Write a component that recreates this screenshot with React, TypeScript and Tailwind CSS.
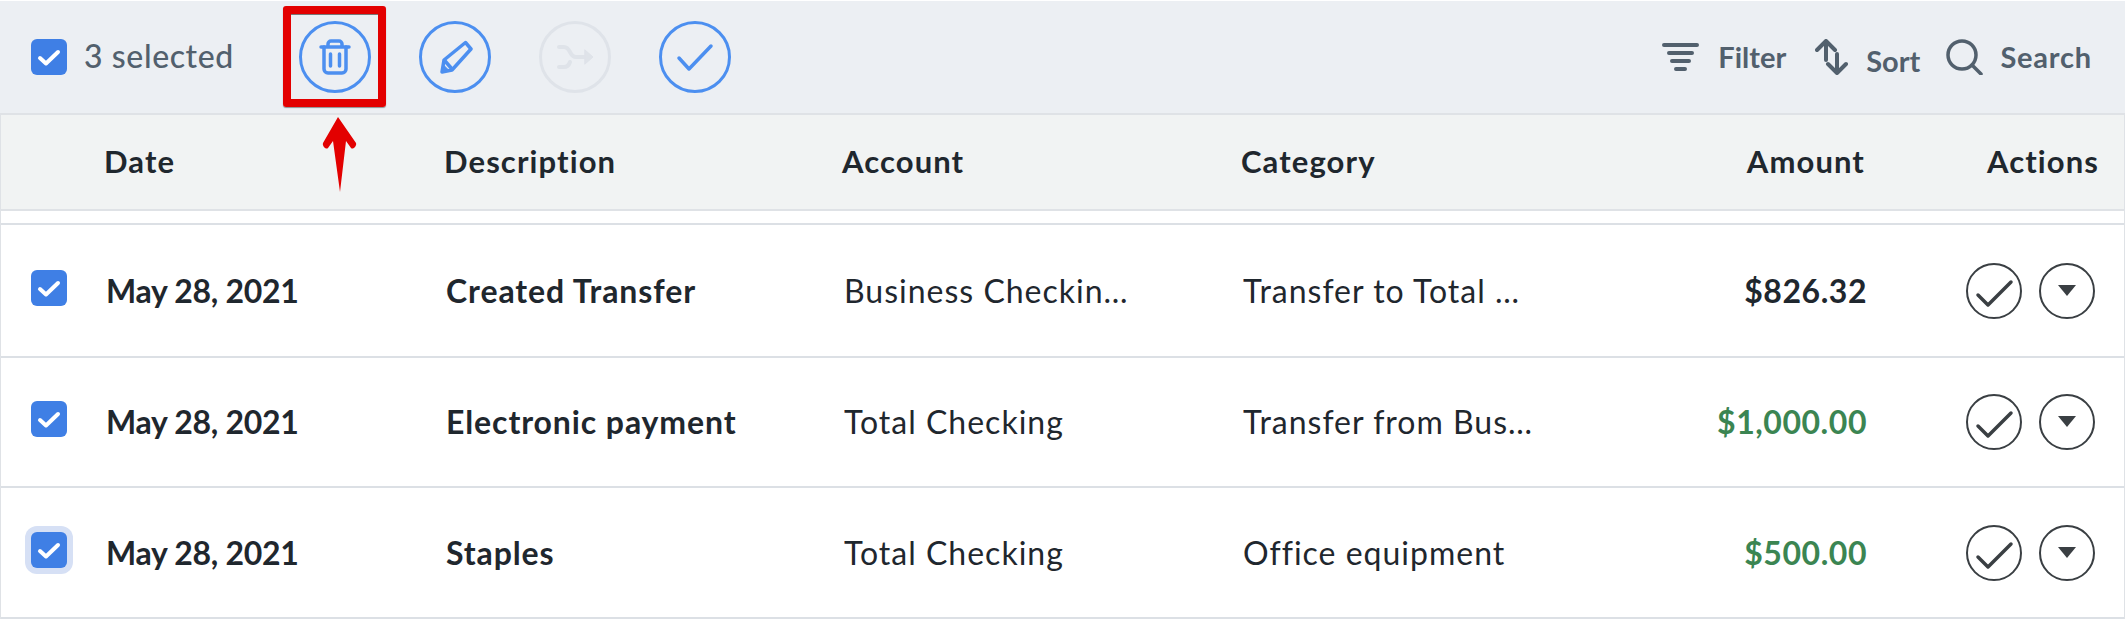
const rows = [
  {
    description: "Created Transfer",
    account: "Business Checking Account",
    category: "Transfer to Total Business",
    amount: "$826.32",
    amountClass: "text-[#1f272e]",
    rowClass: "h-[133px]",
    focused: false,
  },
  {
    description: "Electronic payment",
    account: "Total Checking",
    category: "Transfer from Business",
    amount: "$1,000.00",
    amountClass: "text-[#3b8552]",
    rowClass: "h-[130px]",
    focused: false,
  },
  {
    description: "Staples",
    account: "Total Checking",
    category: "Office equipment",
    amount: "$500.00",
    amountClass: "text-[#3b8552]",
    rowClass: "h-[131px]",
    focused: true,
  },
];

function Checkbox({ focused = false }: { focused?: boolean }) {
  return (
    <div
      className={`h-9 w-9 rounded-md bg-[#3f7fe5] ${
        focused ? "shadow-[0_0_0_6px_#d6e0f5]" : ""
      }`}
    >
      <svg viewBox="0 0 36 36" className="h-9 w-9" fill="none" stroke="#fff" strokeWidth="4" strokeLinecap="round" strokeLinejoin="round">
        <path d="M9 19l6 5.5L27 13" />
      </svg>
    </div>
  );
}

function ToolButton({ muted = false, children }: { muted?: boolean; children: React.ReactNode }) {
  return (
    <div
      className={`flex h-[72px] w-[72px] shrink-0 items-center justify-center rounded-full border-[3.5px] ${
        muted ? "border-[#dfe3e9] text-[#dfe3e9]" : "border-[#4c8ff0] text-[#4c8ff0]"
      }`}
    >
      {children}
    </div>
  );
}

function ActionButtons() {
  return (
    <div className="flex items-center justify-end gap-[17px] pr-[29px]">
      <div className="flex h-14 w-14 items-center justify-center rounded-full border-2 border-[#3a3f43]">
        <svg viewBox="0 0 52 52" className="h-[52px] w-[52px]" fill="none" stroke="#3a3f43" strokeWidth="3.5" strokeLinecap="round" strokeLinejoin="round">
          <path d="M10 30l10 10L43 17" />
        </svg>
      </div>
      <div className="flex h-14 w-14 items-center justify-center rounded-full border-2 border-[#3a3f43]">
        <svg viewBox="0 0 18 11" className="mb-[1px] h-[11px] w-[18px]" fill="#3a3f43">
          <path d="M0 0h18l-9 11z" />
        </svg>
      </div>
    </div>
  );
}

export default function App() {
  return (
    <div className="relative h-[624px] w-[2125px] overflow-hidden bg-white font-['Lato',sans-serif]">
      <div className="flex h-[115px] items-center border-b-2 border-t border-[#dfe2e6] border-t-white bg-[#eceff3] pl-[31px]">
        <Checkbox />
        <span className="mb-[3px] ml-[17px] w-[148px] whitespace-nowrap text-[32px] font-medium tracking-[0.6px] text-[#52606d]">3 selected</span>
        <div className="ml-[67px] flex gap-[48px]">
          <ToolButton>
            <svg viewBox="0 0 32 36" className="h-[36px] w-[32px]" fill="none" stroke="currentColor" strokeWidth="3.5" strokeLinecap="round" strokeLinejoin="round">
              <path d="M2 8h28" />
              <path d="M9 7V5a3 3 0 0 1 3-3h8a3 3 0 0 1 3 3v2" />
              <path d="M5 8v22a4 4 0 0 0 4 4h14a4 4 0 0 0 4-4V8" />
              <path d="M11.5 15v12M20.5 15v12" />
            </svg>
          </ToolButton>
          <ToolButton>
            <svg viewBox="0 0 36 36" className="h-[36px] w-[36px]" fill="none" stroke="currentColor" strokeWidth="3.5" strokeLinecap="round" strokeLinejoin="round">
              <path d="M28.5 3.5l5.5 6.5L15 31l-10 2 2-12z" />
              <path d="M8 22l7 8" />
              <path d="M5 33l1.5-7 5 5z" fill="currentColor" strokeWidth="1" />
            </svg>
          </ToolButton>
          <ToolButton muted>
            <svg viewBox="0 0 38 26" className="h-[26px] w-[38px]" fill="none" stroke="currentColor" strokeWidth="4" strokeLinecap="round" strokeLinejoin="round">
              <path d="M3 3h5c7 0 5 10 12 10h10" />
              <path d="M3 23h5c3 0 5-2 6-5" />
              <path d="M29 6l8 7-8 7z" fill="currentColor" strokeWidth="1" />
            </svg>
          </ToolButton>
          <ToolButton>
            <svg viewBox="0 0 38 30" className="h-[30px] w-[38px]" fill="none" stroke="currentColor" strokeWidth="3.5" strokeLinecap="round" strokeLinejoin="round">
              <path d="M3 16l10 11L35 4" />
            </svg>
          </ToolButton>
        </div>
        <div className="ml-auto flex items-center pr-[33px] text-[29px] font-bold text-[#52606d]">
          <svg viewBox="0 0 37 28" className="h-7 w-[37px]" fill="none" stroke="currentColor" strokeWidth="4" strokeLinecap="round">
            <path d="M2 2h33M7 10h23M10 18h17M14 26h9" />
          </svg>
          <span className="mb-[1px] ml-[19px]">Filter</span>
          <svg viewBox="0 0 33 36" className="ml-[29px] h-9 w-[33px]" fill="none" stroke="currentColor" strokeWidth="4" strokeLinecap="round" strokeLinejoin="round">
            <path d="M11 3v18M2 11l9-9 9 9" />
            <path d="M22 15v18M13 25l9 9 9-9" />
          </svg>
          <span className="ml-[18px] mt-2">Sort</span>
          <svg viewBox="0 0 37 36" className="ml-[26px] h-9 w-[37px]" fill="none" stroke="currentColor" strokeWidth="3.5" strokeLinecap="round">
            <circle cx="16" cy="16" r="14" />
            <path d="M26 26l9 9" />
          </svg>
          <span className="mb-[1px] ml-[17px] tracking-[0.8px]">Search</span>
        </div>
      </div>

      <div className="border-x border-[#dfe2e6]">
        <div className="grid h-[96px] grid-cols-[103px_340px_398px_399px_400px_224px_1fr] items-center border-b-2 border-[#dfe2e6] bg-[#f1f3f3] pb-[2px] text-[31px] font-bold tracking-[1.1px] text-[#1f272e]">
          <span className="col-start-2">Date</span>
          <span>Description</span>
          <span>Account</span>
          <span>Category</span>
          <span className="text-right">Amount</span>
          <span className="pr-[25px] text-right">Actions</span>
        </div>
        <div className="h-[14px] border-b-2 border-[#dce0e5]" />
        {rows.map((row) => (
          <div
            key={row.description}
            className={`grid grid-cols-[105px_340px_398px_399px_400px_224px_1fr] items-center border-b-2 border-[#dce0e5] text-[32px] text-[#1f272e] ${row.rowClass}`}
          >
            <div className="mb-[6px] pl-[30px]">
              <Checkbox focused={row.focused} />
            </div>
            <span className="whitespace-nowrap font-bold tracking-[-0.3px]">May 28, 2021</span>
            <span className="whitespace-nowrap font-bold tracking-[0.9px]">{row.description}</span>
            <span className="w-[286px] truncate tracking-[1px]">{row.account}</span>
            <span className="w-[290px] truncate tracking-[1px]">{row.category}</span>
            <span className={`text-right font-bold tracking-[0.55px] ${row.amountClass}`}>{row.amount}</span>
            <ActionButtons />
          </div>
        ))}
      </div>

      {/* red callout over the delete button */}
      <div className="absolute left-[283px] top-[6px] h-[101px] w-[103px] rounded-[3px] border-[8px] border-[#e30000] shadow-[0_1px_1px_rgba(0,0,0,0.4),inset_0_1px_0_#777]" />
      <svg className="absolute left-[320px] top-[115px]" width="38" height="78" viewBox="0 0 38 78" fill="#e30000">
        <path d="M18 2L36 28c1 3-3 7-5 5l-5-7-6 51-7-51-5 7c-2 2-6-2-5-5z" />
      </svg>
    </div>
  );
}
